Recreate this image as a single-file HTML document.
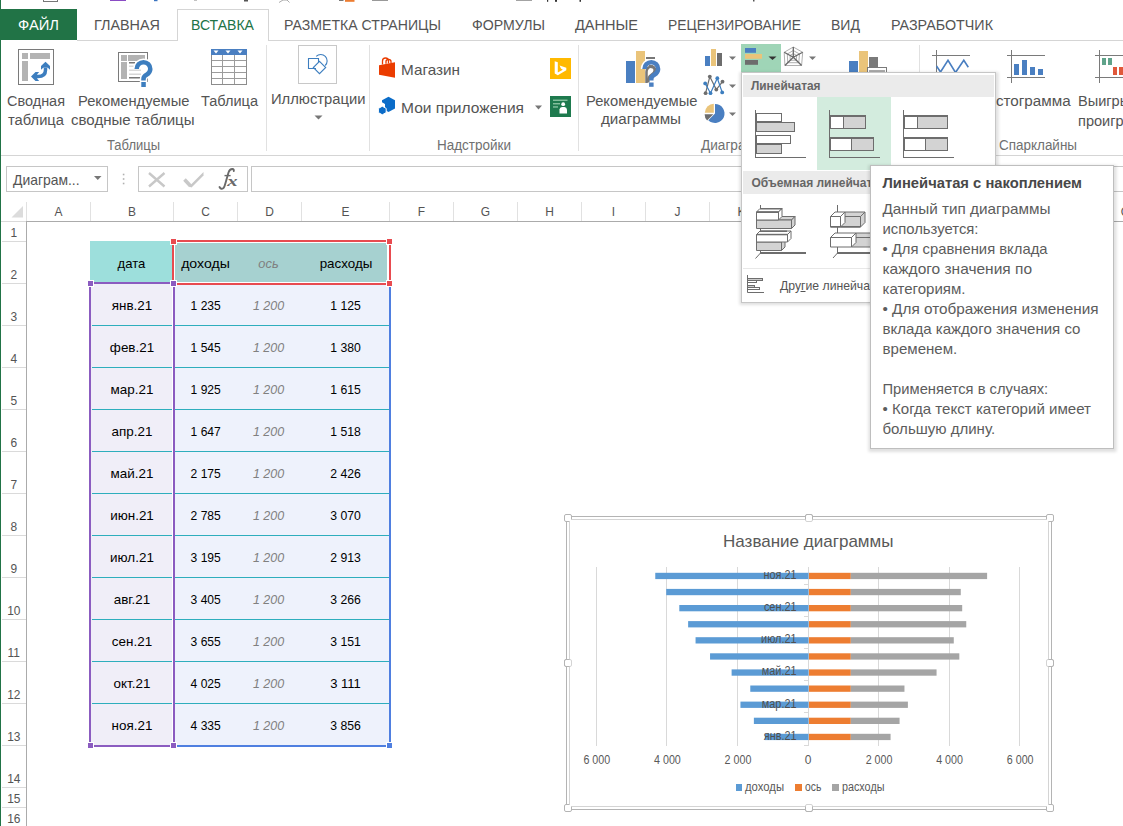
<!DOCTYPE html>
<html><head><meta charset="utf-8"><style>
html,body{margin:0;padding:0;background:#fff;overflow:hidden;width:1123px;height:826px}
svg{display:block;font-family:"Liberation Sans",sans-serif}
</style></head><body>
<svg width="1123" height="826" viewBox="0 0 1123 826">
<rect x="0" y="0" width="1123" height="826" fill="#fff"/>
<rect x="43" y="1" width="15" height="1" fill="#777" />
<rect x="43" y="0" width="1" height="2" fill="#777" />
<rect x="57" y="0" width="1" height="2" fill="#777" />
<rect x="110" y="0" width="16" height="1" fill="#8a4cc4" />
<rect x="154" y="0" width="3.5" height="1.2" fill="#3b74c0" />
<rect x="194" y="0" width="3" height="0.6" fill="#999" />
<rect x="244" y="0" width="4" height="1.5" fill="#555" />
<path d="M279 2.5 L283 0 L287 0 L289.5 2.5" fill="none" stroke="#aaa" stroke-width="1"/>
<rect x="339" y="0" width="4.5" height="0.8" fill="#555" />
<rect x="345" y="0" width="9.5" height="1.8" fill="#ed7d31" />
<rect x="372" y="0" width="16" height="1" fill="#999" />
<rect x="516" y="0" width="16" height="0.9" fill="#999" />
<rect x="547" y="0" width="1.2" height="1.8" fill="#333" />
<rect x="555" y="0" width="2" height="1.8" fill="#333" />
<rect x="579.5" y="0" width="1.5" height="1.8" fill="#333" />
<rect x="753" y="0" width="1.5" height="1.5" fill="#555" />
<rect x="0" y="9" width="77" height="31" fill="#217346" />
<rect x="77" y="40" width="100" height="1" fill="#d5d5d5" />
<rect x="269" y="40" width="854" height="1" fill="#d5d5d5" />
<rect x="177" y="9" width="1" height="32" fill="#d5d5d5" />
<rect x="268" y="9" width="1" height="32" fill="#d5d5d5" />
<rect x="177" y="9" width="92" height="1" fill="#d5d5d5" />
<text x="18" y="30" font-size="15" fill="#fff" textLength="41.00" lengthAdjust="spacingAndGlyphs" text-anchor="start" >ФАЙЛ</text>
<text x="94" y="30" font-size="15" fill="#545454" textLength="66.00" lengthAdjust="spacingAndGlyphs" text-anchor="start" >ГЛАВНАЯ</text>
<text x="191" y="30" font-size="15" fill="#217346" textLength="63.00" lengthAdjust="spacingAndGlyphs" text-anchor="start" >ВСТАВКА</text>
<text x="284" y="30" font-size="15" fill="#545454" textLength="157.00" lengthAdjust="spacingAndGlyphs" text-anchor="start" >РАЗМЕТКА СТРАНИЦЫ</text>
<text x="472" y="30" font-size="15" fill="#545454" textLength="73.00" lengthAdjust="spacingAndGlyphs" text-anchor="start" >ФОРМУЛЫ</text>
<text x="575" y="30" font-size="15" fill="#545454" textLength="63.00" lengthAdjust="spacingAndGlyphs" text-anchor="start" >ДАННЫЕ</text>
<text x="668" y="30" font-size="15" fill="#545454" textLength="133.00" lengthAdjust="spacingAndGlyphs" text-anchor="start" >РЕЦЕНЗИРОВАНИЕ</text>
<text x="831" y="30" font-size="15" fill="#545454" textLength="29.00" lengthAdjust="spacingAndGlyphs" text-anchor="start" >ВИД</text>
<text x="891" y="30" font-size="15" fill="#545454" textLength="102.00" lengthAdjust="spacingAndGlyphs" text-anchor="start" >РАЗРАБОТЧИК</text>
<rect x="0" y="155" width="1123" height="1" fill="#d5d5d5" />
<rect x="266" y="45" width="1" height="106" fill="#e1e1e1" />
<rect x="369" y="45" width="1" height="106" fill="#e1e1e1" />
<rect x="578" y="45" width="1" height="106" fill="#e1e1e1" />
<rect x="919" y="45" width="1" height="106" fill="#e1e1e1" />
<text x="107" y="150" font-size="14" fill="#707070" textLength="53.00" lengthAdjust="spacingAndGlyphs" text-anchor="start" >Таблицы</text>
<text x="437" y="150" font-size="14" fill="#707070" textLength="74.00" lengthAdjust="spacingAndGlyphs" text-anchor="start" >Надстройки</text>
<text x="701" y="150" font-size="14" fill="#707070" textLength="73.00" lengthAdjust="spacingAndGlyphs" text-anchor="start" >Диаграммы</text>
<text x="999" y="150" font-size="14" fill="#707070" textLength="78.00" lengthAdjust="spacingAndGlyphs" text-anchor="start" >Спарклайны</text>
<text x="7" y="106" font-size="14" fill="#545454" textLength="58.00" lengthAdjust="spacingAndGlyphs" text-anchor="start" >Сводная</text>
<text x="8" y="124.5" font-size="14" fill="#545454" textLength="56.00" lengthAdjust="spacingAndGlyphs" text-anchor="start" >таблица</text>
<text x="78" y="106" font-size="14" fill="#545454" textLength="111.50" lengthAdjust="spacingAndGlyphs" text-anchor="start" >Рекомендуемые</text>
<text x="71" y="124.5" font-size="14" fill="#545454" textLength="123.50" lengthAdjust="spacingAndGlyphs" text-anchor="start" >сводные таблицы</text>
<text x="201" y="106" font-size="14" fill="#545454" textLength="57.00" lengthAdjust="spacingAndGlyphs" text-anchor="start" >Таблица</text>
<text x="271" y="104" font-size="14" fill="#545454" textLength="94.50" lengthAdjust="spacingAndGlyphs" text-anchor="start" >Иллюстрации</text>
<path d="M314.5 115.5 L322.5 115.5 L318.5 119.5 Z" fill="#777"/>
<text x="401" y="75.3" font-size="15" fill="#545454" textLength="59.00" lengthAdjust="spacingAndGlyphs" text-anchor="start" >Магазин</text>
<text x="401" y="113" font-size="15" fill="#545454" textLength="123.00" lengthAdjust="spacingAndGlyphs" text-anchor="start" >Мои приложения</text>
<path d="M535 105.5 L542 105.5 L538.5 109.5 Z" fill="#777"/>
<text x="586" y="106.3" font-size="14" fill="#545454" textLength="111.50" lengthAdjust="spacingAndGlyphs" text-anchor="start" >Рекомендуемые</text>
<text x="601" y="124.4" font-size="14" fill="#545454" textLength="80.00" lengthAdjust="spacingAndGlyphs" text-anchor="start" >диаграммы</text>
<text x="980" y="106" font-size="14" fill="#545454" textLength="90.60" lengthAdjust="spacingAndGlyphs" text-anchor="start" >Гистограмма</text>
<text x="1078" y="106" font-size="14" fill="#545454" textLength="67.91" lengthAdjust="spacingAndGlyphs" text-anchor="start" >Выигрыш/</text>
<text x="1078" y="125.5" font-size="14" fill="#545454" textLength="67.76" lengthAdjust="spacingAndGlyphs" text-anchor="start" >проигрыш</text>
<text x="951" y="106" font-size="14" fill="#545454" textLength="49.75" lengthAdjust="spacingAndGlyphs" text-anchor="middle" >График</text>
<rect x="18.5" y="49.5" width="35" height="35" fill="#fff" stroke="#7a7a7a" stroke-width="1"/>
<rect x="22" y="53" width="6" height="6" fill="#b3b3b3" />
<rect x="30" y="53" width="20" height="6" fill="#b3b3b3" />
<rect x="22" y="61" width="6" height="20" fill="#b3b3b3" />
<path d="M45.5 68 L45.5 70 Q45.5 76.5 38 76.5 L37 76.5" fill="none" stroke="#3d7ebf" stroke-width="3.5"/>
<path d="M45.5 61.8 L50 66 L50 69.8 L47.8 67.8 L43.2 67.8 L41 69.8 L41 66 Z" fill="#3d7ebf"/>
<path d="M31 76.5 L35.5 72 L39.2 72 L37.2 74.2 L37.2 78.8 L39.2 81 L35.5 81 Z" fill="#3d7ebf"/>
<rect x="118.5" y="52.5" width="29" height="29" fill="#fff" stroke="#7a7a7a" stroke-width="1"/>
<rect x="121" y="55" width="6" height="6" fill="#b3b3b3" />
<rect x="128" y="55" width="17" height="6" fill="#b3b3b3" />
<rect x="121" y="62" width="6" height="17" fill="#b3b3b3" />
<rect x="129" y="62" width="6" height="1.5" fill="#777" />
<rect x="129" y="65.5" width="12" height="1.5" fill="#d9d9d9" />
<rect x="129" y="69.5" width="12" height="1.5" fill="#d9d9d9" />
<rect x="129" y="73.5" width="12" height="1.5" fill="#d6d6d6" />
<rect x="129" y="77" width="11" height="1.5" fill="#777" />
<path d="M136.7 69 A6.8 6.8 0 0 1 150.3 69 Q150.3 72.5 146.5 74.8 Q143.5 76.5 143.5 79 L143.5 80.6" fill="none" stroke="#fff" stroke-width="7.5"/>
<rect x="139.8" y="80.5" width="7.5" height="8" fill="#fff"/>
<path d="M136.7 69 A6.8 6.8 0 0 1 150.3 69 Q150.3 72.5 146.5 74.8 Q143.5 76.5 143.5 79 L143.5 80.6" fill="none" stroke="#3d7ebf" stroke-width="4.5"/>
<rect x="141.3" y="82" width="4.5" height="5" fill="#3d7ebf" />
<rect x="211" y="49" width="36" height="6" fill="#4a7fc1" />
<rect x="211.5" y="49.5" width="35" height="35" fill="none" stroke="#8c8c8c" stroke-width="1"/>
<rect x="211" y="49" width="36" height="6" fill="#4a7fc1" />
<rect x="212" y="60" width="34" height="1" fill="#9c9c9c" />
<rect x="212" y="66" width="34" height="1" fill="#9c9c9c" />
<rect x="212" y="72" width="34" height="1" fill="#9c9c9c" />
<rect x="212" y="78" width="34" height="1" fill="#9c9c9c" />
<rect x="222" y="55" width="1" height="29" fill="#9c9c9c" />
<rect x="234" y="55" width="1" height="29" fill="#9c9c9c" />
<path d="M213.5 50.5 L218.5 50.5 L216 53.5 Z" fill="#fff"/>
<path d="M225.5 50.5 L230.5 50.5 L228 53.5 Z" fill="#fff"/>
<path d="M237.5 50.5 L242.5 50.5 L240 53.5 Z" fill="#fff"/>
<rect x="298.5" y="45.5" width="38" height="38" fill="#fff" stroke="#c8c8c8" stroke-width="1"/>
<path d="M316 68.5 L308.5 68.5 L308.5 58.5 L318.5 58.5 L318.5 62" fill="none" stroke="#3d7ebf" stroke-width="1.1"/>
<path d="M316.2 56.3 A6 6 0 1 1 325.2 65.5" fill="none" stroke="#3d7ebf" stroke-width="1.1"/>
<path d="M319.5 61.3 L325.7 67.5 L319.5 73.7 L313.3 67.5 Z" fill="none" stroke="#3d7ebf" stroke-width="1.1"/>
<path d="M379 65.2 L395 62.3 L395 77.7 L379 74.7 Z" fill="#eb3c00"/>
<path d="M382.5 64.5 L382.5 61 Q382.5 58 385.5 58 Q388.5 58 388.5 61 L388.5 63.5" fill="none" stroke="#eb3c00" stroke-width="1.3"/>
<path d="M386 63.8 L386 61.5 Q386 59.5 388.5 59.5 Q391 59.5 391 61.5 L391 63" fill="none" stroke="#eb3c00" stroke-width="1.3"/>
<path d="M388.5 96.8 L395 100.3 L395 108.5 L388.5 112 L385 110 L385 104 L382 102.2 L382 100.3 Z" fill="#0b6cc8"/>
<path d="M382.3 106.2 L386.2 108.4 L386.2 112.6 L382.3 114.8 L378.4 112.6 L378.4 108.4 Z" fill="#0b6cc8" stroke="#fff" stroke-width="1"/>
<rect x="550" y="58" width="21" height="21" fill="#ffb900" />
<path d="M554.7 61.3 L557.8 62.3 L557.8 72.6 L562.8 69.8 L560.9 68.6 L559.6 65.4 L566.3 67.7 L566.3 70.3 L557.8 75.3 L554.7 73.6 Z" fill="#fff"/>
<rect x="550" y="96" width="21" height="21" fill="#1e7a4e" />
<rect x="553" y="99.6" width="14.5" height="1.3" fill="#8fc7a6" />
<rect x="553" y="103.1" width="7" height="1.3" fill="#8fc7a6" />
<rect x="553" y="106.3" width="5" height="1.3" fill="#8fc7a6" />
<circle cx="563.2" cy="104.2" r="1.9" fill="#fff"/><path d="M559.5 113.5 L559.5 109.5 Q559.8 107.3 562 107 L564.5 107 Q566.7 107.3 567 109.5 L567 113.5 Z" fill="#fff"/>
<rect x="626" y="61" width="9" height="22" fill="#4a7fc1" />
<rect x="636" y="51" width="9" height="32" fill="#eac47a" />
<rect x="646" y="57" width="9" height="26" fill="#777" />
<path d="M644.5 69 A6.8 6.8 0 0 1 658.0999999999999 69 Q658.0999999999999 72.5 654.3 74.8 Q651.3 76.5 651.3 79 L651.3 80.6" fill="none" stroke="#fff" stroke-width="7.5"/>
<rect x="647.5" y="80.5" width="7.5" height="8" fill="#fff"/>
<rect x="646" y="59" width="9" height="24" fill="#fff" />
<rect x="646" y="57" width="9" height="2" fill="#777" />
<path d="M646.5 83 L646.5 72 Q646.5 67.5 651 66.5 L653 66.5" fill="none" stroke="#777" stroke-width="2.5"/>
<path d="M649 66.5 Q654.5 66 655 70 Q655 73 651.5 75 Q648 77 648 82.5" fill="none" stroke="#777" stroke-width="3"/>
<path d="M644.5 69 A6.8 6.8 0 0 1 658.0999999999999 69 Q658.0999999999999 72.5 654.3 74.8 Q651.3 76.5 651.3 79 L651.3 80.6" fill="none" stroke="#4a7fc1" stroke-width="4.5"/>
<rect x="649.1" y="82.5" width="4.5" height="4.3" fill="#4a7fc1" />
<rect x="705" y="56" width="5" height="10" fill="#4a7fc1" />
<rect x="711" y="49" width="5" height="17" fill="#eac47a" />
<rect x="717" y="53" width="5" height="13" fill="#6d6d6d" />
<path d="M729 56.5 L736 56.5 L732.5 60 Z" fill="#777"/>
<rect x="741" y="44" width="40" height="28" fill="#9fd5b7" />
<rect x="745" y="48" width="11" height="4.8" fill="#4a7fc1" />
<rect x="745" y="54" width="17" height="4.8" fill="#eac47a" />
<rect x="745" y="60" width="13" height="4.8" fill="#6d6d6d" />
<path d="M768.5 56.5 L776.5 56.5 L772.5 60 Z" fill="#333"/>
<g fill="none" stroke="#b0b0b0" stroke-width="1"><path d="M793.30 47.00 L802.70 52.30 L801.60 65.50 L784.90 65.50 L784.20 52.30 Z"/><path d="M793.30 50.50 L799.50 54.00 L798.78 62.71 L787.76 62.71 L787.29 54.00 Z"/><path d="M793.30 53.59 L796.68 55.50 L796.29 60.25 L790.28 60.25 L790.02 55.50 Z"/></g><path d="M793.3 57.3 L793.3 47 M793.3 57.3 L802.7 52.3 M793.3 57.3 L801.6 65.5 M793.3 57.3 L784.9 65.5 M793.3 57.3 L784.2 52.3 " stroke="#686868" stroke-width="1.3" fill="none"/>
<path d="M809 56.5 L816 56.5 L812.5 60 Z" fill="#777"/>
<path d="M705.6 93.2 L709.8 76.6 L716.3 89.6 L722.5 81.7" fill="none" stroke="#6d6d6d" stroke-width="1.2"/>
<path d="M705.2 83.4 L710.5 93.2 L717.3 78.2 L722.2 92.4" fill="none" stroke="#3d7ebf" stroke-width="1.2"/>
<circle cx="705.6" cy="93.2" r="1.9" fill="#6d6d6d"/>
<circle cx="709.8" cy="76.6" r="1.9" fill="#6d6d6d"/>
<circle cx="716.3" cy="89.6" r="1.9" fill="#6d6d6d"/>
<circle cx="722.5" cy="81.7" r="1.9" fill="#6d6d6d"/>
<circle cx="705.2" cy="83.4" r="1.9" fill="#3d7ebf"/>
<circle cx="710.5" cy="93.2" r="1.9" fill="#3d7ebf"/>
<circle cx="717.3" cy="78.2" r="1.9" fill="#3d7ebf"/>
<circle cx="722.2" cy="92.4" r="1.9" fill="#3d7ebf"/>
<path d="M729 84.5 L736 84.5 L732.5 88 Z" fill="#777"/>
<path d="M715 113.5 L715 104 A9.5 9.5 0 1 1 708.3 120.2 Z" fill="#4a7fc1"/>
<path d="M713.8 112.8 L704.8 112.8 A9 9 0 0 1 713.8 103.8 Z" fill="#eac47a"/>
<path d="M713.3 114.3 L704.6 114.3 A8.8 8.8 0 0 0 707.1 120.5 Z" fill="#6d6d6d"/>
<path d="M729 112.5 L736 112.5 L732.5 116 Z" fill="#777"/>
<rect x="849" y="61" width="9" height="14" fill="#4a7fc1" />
<rect x="859" y="51" width="9" height="24" fill="#eac47a" />
<rect x="869" y="57" width="9" height="18" fill="#7a7a7a" />
<rect x="867.5" y="67.5" width="19" height="9" fill="#fff" stroke="#7a7a7a" stroke-width="1"/>
<rect x="869" y="70" width="16" height="2" fill="#aaa" />
<rect x="936" y="50" width="1" height="33" fill="#7a7a7a" />
<rect x="932" y="55" width="38" height="1" fill="#7a7a7a" />
<rect x="932" y="77" width="38" height="1" fill="#7a7a7a" />
<path d="M936.5 66 L940.5 72 L948 60.3 L955.5 72.5 L963.8 60.3 L968.3 67.3" fill="none" stroke="#4a7fc1" stroke-width="1.6"/>
<rect x="1011" y="50" width="1" height="33" fill="#7a7a7a" />
<rect x="1007" y="55" width="38" height="1" fill="#7a7a7a" />
<rect x="1007" y="77" width="38" height="1" fill="#7a7a7a" />
<rect x="1014" y="64" width="5" height="11" fill="#4a7fc1" />
<rect x="1022" y="60" width="5" height="15" fill="#4a7fc1" />
<rect x="1030" y="67" width="5" height="8" fill="#4a7fc1" />
<rect x="1038" y="69" width="5" height="6" fill="#4a7fc1" />
<rect x="1099" y="50" width="1" height="33" fill="#7a7a7a" />
<rect x="1095" y="55" width="28" height="1" fill="#7a7a7a" />
<rect x="1095" y="77" width="28" height="1" fill="#7a7a7a" />
<rect x="1102" y="58" width="4" height="7" fill="#5fa38a" />
<rect x="1108" y="58" width="4" height="7" fill="#5fa38a" />
<rect x="1113" y="67" width="4" height="8" fill="#e0583a" />
<rect x="1119" y="67" width="4" height="8" fill="#e0583a" />
<rect x="6.5" y="166.5" width="101" height="25" fill="#fff" stroke="#c6c6c6" stroke-width="1"/>
<text x="13" y="185" font-size="15" fill="#545454" textLength="66.50" lengthAdjust="spacingAndGlyphs" text-anchor="start" >Диаграм...</text>
<path d="M94 176 L101.5 176 L97.75 180 Z" fill="#777"/>
<rect x="122.8" y="173.7" width="1.6" height="1.6" fill="#b0b0b0" />
<rect x="122.8" y="178.2" width="1.6" height="1.6" fill="#b0b0b0" />
<rect x="122.8" y="182.7" width="1.6" height="1.6" fill="#b0b0b0" />
<rect x="138.5" y="166.5" width="109" height="25" fill="#fff" stroke="#c6c6c6" stroke-width="1"/>
<path d="M149 173 L164.5 186.5 M164.5 173 L149 186.5" stroke="#c8c8c8" stroke-width="2.4" fill="none"/>
<path d="M184.5 179.5 L190.5 186" stroke="#c8c8c8" stroke-width="3.6" fill="none"/><path d="M189 186.5 L203.5 172 L203.5 175.5 L191.5 187.5 Z" fill="#c8c8c8"/>
<path d="M219.5 187 Q221 190 223.5 188 Q224.5 187 225.5 183 L228.5 172.5 Q229.8 168.8 232.5 169 Q234 169.2 233.8 171" fill="none" stroke="#6a6a6a" stroke-width="1.9" stroke-linecap="round"/>
<path d="M224.5 175.6 L230.6 175.6" stroke="#6a6a6a" stroke-width="1.4"/>
<text x="227.3" y="186" font-family="Liberation Serif" font-size="14" font-style="italic" font-weight="bold" fill="#6a6a6a" textLength="10.3" lengthAdjust="spacingAndGlyphs">x</text>
<rect x="251.5" y="166.5" width="879" height="25" fill="#fff" stroke="#c6c6c6" stroke-width="1"/>
<rect x="26" y="202" width="1" height="19" fill="#e1e1e1" />
<rect x="90" y="202" width="1" height="19" fill="#e1e1e1" />
<rect x="173" y="202" width="1" height="19" fill="#e1e1e1" />
<rect x="237" y="202" width="1" height="19" fill="#e1e1e1" />
<rect x="301" y="202" width="1" height="19" fill="#e1e1e1" />
<rect x="389" y="202" width="1" height="19" fill="#e1e1e1" />
<rect x="453" y="202" width="1" height="19" fill="#e1e1e1" />
<rect x="517" y="202" width="1" height="19" fill="#e1e1e1" />
<rect x="581" y="202" width="1" height="19" fill="#e1e1e1" />
<rect x="645" y="202" width="1" height="19" fill="#e1e1e1" />
<rect x="709" y="202" width="1" height="19" fill="#e1e1e1" />
<rect x="773" y="202" width="1" height="19" fill="#e1e1e1" />
<rect x="837" y="202" width="1" height="19" fill="#e1e1e1" />
<rect x="901" y="202" width="1" height="19" fill="#e1e1e1" />
<rect x="965" y="202" width="1" height="19" fill="#e1e1e1" />
<rect x="1029" y="202" width="1" height="19" fill="#e1e1e1" />
<rect x="1093" y="202" width="1" height="19" fill="#e1e1e1" />
<rect x="1157" y="202" width="1" height="19" fill="#e1e1e1" />
<rect x="1" y="221" width="25" height="1" fill="#dadada" />
<rect x="26" y="221" width="1097" height="1" fill="#ababab" />
<rect x="26" y="221" width="1" height="605" fill="#ababab" />
<path d="M11.5 217.5 L23 206 L23 217.5 Z" fill="#dcdcdc"/>
<text x="58.5" y="216" font-size="13" fill="#545454" textLength="7.98" lengthAdjust="spacingAndGlyphs" text-anchor="middle" >A</text>
<text x="132.0" y="216" font-size="13" fill="#545454" textLength="7.98" lengthAdjust="spacingAndGlyphs" text-anchor="middle" >B</text>
<text x="205.5" y="216" font-size="13" fill="#545454" textLength="8.64" lengthAdjust="spacingAndGlyphs" text-anchor="middle" >C</text>
<text x="269.5" y="216" font-size="13" fill="#545454" textLength="8.64" lengthAdjust="spacingAndGlyphs" text-anchor="middle" >D</text>
<text x="345.5" y="216" font-size="13" fill="#545454" textLength="7.98" lengthAdjust="spacingAndGlyphs" text-anchor="middle" >E</text>
<text x="421.5" y="216" font-size="13" fill="#545454" textLength="7.30" lengthAdjust="spacingAndGlyphs" text-anchor="middle" >F</text>
<text x="485.5" y="216" font-size="13" fill="#545454" textLength="9.30" lengthAdjust="spacingAndGlyphs" text-anchor="middle" >G</text>
<text x="549.5" y="216" font-size="13" fill="#545454" textLength="8.64" lengthAdjust="spacingAndGlyphs" text-anchor="middle" >H</text>
<text x="613.5" y="216" font-size="13" fill="#545454" textLength="3.32" lengthAdjust="spacingAndGlyphs" text-anchor="middle" >I</text>
<text x="677.5" y="216" font-size="13" fill="#545454" textLength="5.98" lengthAdjust="spacingAndGlyphs" text-anchor="middle" >J</text>
<text x="741.5" y="216" font-size="13" fill="#545454" textLength="7.98" lengthAdjust="spacingAndGlyphs" text-anchor="middle" >K</text>
<text x="805.5" y="216" font-size="13" fill="#545454" textLength="6.65" lengthAdjust="spacingAndGlyphs" text-anchor="middle" >L</text>
<text x="869.5" y="216" font-size="13" fill="#545454" textLength="9.96" lengthAdjust="spacingAndGlyphs" text-anchor="middle" >M</text>
<text x="933.5" y="216" font-size="13" fill="#545454" textLength="8.64" lengthAdjust="spacingAndGlyphs" text-anchor="middle" >N</text>
<text x="997.5" y="216" font-size="13" fill="#545454" textLength="9.30" lengthAdjust="spacingAndGlyphs" text-anchor="middle" >O</text>
<text x="1061.5" y="216" font-size="13" fill="#545454" textLength="7.98" lengthAdjust="spacingAndGlyphs" text-anchor="middle" >P</text>
<text x="1125.5" y="216" font-size="13" fill="#545454" textLength="9.30" lengthAdjust="spacingAndGlyphs" text-anchor="middle" >Q</text>
<rect x="2" y="241" width="24" height="1" fill="#dadada" />
<text x="13.8" y="237" font-size="13" fill="#545454" textLength="6.65" lengthAdjust="spacingAndGlyphs" text-anchor="middle" >1</text>
<rect x="2" y="283" width="24" height="1" fill="#dadada" />
<text x="13.8" y="279" font-size="13" fill="#545454" textLength="6.65" lengthAdjust="spacingAndGlyphs" text-anchor="middle" >2</text>
<rect x="2" y="325" width="24" height="1" fill="#dadada" />
<text x="13.8" y="321" font-size="13" fill="#545454" textLength="6.65" lengthAdjust="spacingAndGlyphs" text-anchor="middle" >3</text>
<rect x="2" y="367" width="24" height="1" fill="#dadada" />
<text x="13.8" y="363" font-size="13" fill="#545454" textLength="6.65" lengthAdjust="spacingAndGlyphs" text-anchor="middle" >4</text>
<rect x="2" y="409" width="24" height="1" fill="#dadada" />
<text x="13.8" y="405" font-size="13" fill="#545454" textLength="6.65" lengthAdjust="spacingAndGlyphs" text-anchor="middle" >5</text>
<rect x="2" y="451" width="24" height="1" fill="#dadada" />
<text x="13.8" y="447" font-size="13" fill="#545454" textLength="6.65" lengthAdjust="spacingAndGlyphs" text-anchor="middle" >6</text>
<rect x="2" y="493" width="24" height="1" fill="#dadada" />
<text x="13.8" y="489" font-size="13" fill="#545454" textLength="6.65" lengthAdjust="spacingAndGlyphs" text-anchor="middle" >7</text>
<rect x="2" y="535" width="24" height="1" fill="#dadada" />
<text x="13.8" y="531" font-size="13" fill="#545454" textLength="6.65" lengthAdjust="spacingAndGlyphs" text-anchor="middle" >8</text>
<rect x="2" y="577" width="24" height="1" fill="#dadada" />
<text x="13.8" y="573" font-size="13" fill="#545454" textLength="6.65" lengthAdjust="spacingAndGlyphs" text-anchor="middle" >9</text>
<rect x="2" y="619" width="24" height="1" fill="#dadada" />
<text x="13.8" y="615" font-size="13" fill="#545454" textLength="13.30" lengthAdjust="spacingAndGlyphs" text-anchor="middle" >10</text>
<rect x="2" y="661" width="24" height="1" fill="#dadada" />
<text x="13.8" y="657" font-size="13" fill="#545454" textLength="12.41" lengthAdjust="spacingAndGlyphs" text-anchor="middle" >11</text>
<rect x="2" y="703" width="24" height="1" fill="#dadada" />
<text x="13.8" y="699" font-size="13" fill="#545454" textLength="13.30" lengthAdjust="spacingAndGlyphs" text-anchor="middle" >12</text>
<rect x="2" y="745" width="24" height="1" fill="#dadada" />
<text x="13.8" y="741" font-size="13" fill="#545454" textLength="13.30" lengthAdjust="spacingAndGlyphs" text-anchor="middle" >13</text>
<rect x="2" y="787" width="24" height="1" fill="#dadada" />
<text x="13.8" y="783" font-size="13" fill="#545454" textLength="13.30" lengthAdjust="spacingAndGlyphs" text-anchor="middle" >14</text>
<rect x="2" y="807" width="24" height="1" fill="#dadada" />
<text x="13.8" y="803" font-size="13" fill="#545454" textLength="13.30" lengthAdjust="spacingAndGlyphs" text-anchor="middle" >15</text>
<rect x="2" y="827" width="24" height="1" fill="#dadada" />
<text x="13.8" y="823" font-size="13" fill="#545454" textLength="13.30" lengthAdjust="spacingAndGlyphs" text-anchor="middle" >16</text>
<rect x="90" y="241" width="82" height="41" fill="#9ddfdc" />
<rect x="175" y="243" width="212" height="39" fill="#a6d1d0" />
<rect x="91" y="284" width="81" height="461" fill="#f0eef8" />
<rect x="175" y="285" width="214" height="460" fill="#eef2fc" />
<rect x="92" y="325" width="80" height="1" fill="#2eaebd" />
<rect x="175" y="325" width="214" height="1" fill="#2eaebd" />
<rect x="92" y="367" width="80" height="1" fill="#2eaebd" />
<rect x="175" y="367" width="214" height="1" fill="#2eaebd" />
<rect x="92" y="409" width="80" height="1" fill="#2eaebd" />
<rect x="175" y="409" width="214" height="1" fill="#2eaebd" />
<rect x="92" y="451" width="80" height="1" fill="#2eaebd" />
<rect x="175" y="451" width="214" height="1" fill="#2eaebd" />
<rect x="92" y="493" width="80" height="1" fill="#2eaebd" />
<rect x="175" y="493" width="214" height="1" fill="#2eaebd" />
<rect x="92" y="535" width="80" height="1" fill="#2eaebd" />
<rect x="175" y="535" width="214" height="1" fill="#2eaebd" />
<rect x="92" y="577" width="80" height="1" fill="#2eaebd" />
<rect x="175" y="577" width="214" height="1" fill="#2eaebd" />
<rect x="92" y="619" width="80" height="1" fill="#2eaebd" />
<rect x="175" y="619" width="214" height="1" fill="#2eaebd" />
<rect x="92" y="661" width="80" height="1" fill="#2eaebd" />
<rect x="175" y="661" width="214" height="1" fill="#2eaebd" />
<rect x="92" y="703" width="80" height="1" fill="#2eaebd" />
<rect x="175" y="703" width="214" height="1" fill="#2eaebd" />
<text x="131.5" y="267.8" font-size="13.5" fill="#000" textLength="27.80" lengthAdjust="spacingAndGlyphs" text-anchor="middle" >дата</text>
<text x="205.5" y="267.8" font-size="13.5" fill="#000" textLength="48.70" lengthAdjust="spacingAndGlyphs" text-anchor="middle" >доходы</text>
<text x="268.5" y="267.8" font-size="13.5" fill="#808080" font-style="italic" textLength="20.30" lengthAdjust="spacingAndGlyphs" text-anchor="middle" >ось</text>
<text x="346" y="267.8" font-size="13.5" fill="#000" textLength="52.70" lengthAdjust="spacingAndGlyphs" text-anchor="middle" >расходы</text>
<text x="132" y="310" font-size="13.5" fill="#000" textLength="40.50" lengthAdjust="spacingAndGlyphs" text-anchor="middle" >янв.21</text>
<text x="205.7" y="310" font-size="13.5" fill="#000" textLength="30.20" lengthAdjust="spacingAndGlyphs" text-anchor="middle" >1 235</text>
<text x="268.6" y="310" font-size="13.5" fill="#808080" font-style="italic" textLength="31.30" lengthAdjust="spacingAndGlyphs" text-anchor="middle" >1 200</text>
<text x="345.5" y="310" font-size="13.5" fill="#000" textLength="30.60" lengthAdjust="spacingAndGlyphs" text-anchor="middle" >1 125</text>
<text x="132" y="352" font-size="13.5" fill="#000" textLength="44.33" lengthAdjust="spacingAndGlyphs" text-anchor="middle" >фев.21</text>
<text x="205.7" y="352" font-size="13.5" fill="#000" textLength="30.20" lengthAdjust="spacingAndGlyphs" text-anchor="middle" >1 545</text>
<text x="268.6" y="352" font-size="13.5" fill="#808080" font-style="italic" textLength="31.30" lengthAdjust="spacingAndGlyphs" text-anchor="middle" >1 200</text>
<text x="345.5" y="352" font-size="13.5" fill="#000" textLength="30.60" lengthAdjust="spacingAndGlyphs" text-anchor="middle" >1 380</text>
<text x="132" y="394" font-size="13.5" fill="#000" textLength="42.85" lengthAdjust="spacingAndGlyphs" text-anchor="middle" >мар.21</text>
<text x="205.7" y="394" font-size="13.5" fill="#000" textLength="30.20" lengthAdjust="spacingAndGlyphs" text-anchor="middle" >1 925</text>
<text x="268.6" y="394" font-size="13.5" fill="#808080" font-style="italic" textLength="31.30" lengthAdjust="spacingAndGlyphs" text-anchor="middle" >1 200</text>
<text x="345.5" y="394" font-size="13.5" fill="#000" textLength="30.60" lengthAdjust="spacingAndGlyphs" text-anchor="middle" >1 615</text>
<text x="132" y="436" font-size="13.5" fill="#000" textLength="40.89" lengthAdjust="spacingAndGlyphs" text-anchor="middle" >апр.21</text>
<text x="205.7" y="436" font-size="13.5" fill="#000" textLength="30.20" lengthAdjust="spacingAndGlyphs" text-anchor="middle" >1 647</text>
<text x="268.6" y="436" font-size="13.5" fill="#808080" font-style="italic" textLength="31.30" lengthAdjust="spacingAndGlyphs" text-anchor="middle" >1 200</text>
<text x="345.5" y="436" font-size="13.5" fill="#000" textLength="30.60" lengthAdjust="spacingAndGlyphs" text-anchor="middle" >1 518</text>
<text x="132" y="478" font-size="13.5" fill="#000" textLength="42.88" lengthAdjust="spacingAndGlyphs" text-anchor="middle" >май.21</text>
<text x="205.7" y="478" font-size="13.5" fill="#000" textLength="30.20" lengthAdjust="spacingAndGlyphs" text-anchor="middle" >2 175</text>
<text x="268.6" y="478" font-size="13.5" fill="#808080" font-style="italic" textLength="31.30" lengthAdjust="spacingAndGlyphs" text-anchor="middle" >1 200</text>
<text x="345.5" y="478" font-size="13.5" fill="#000" textLength="30.60" lengthAdjust="spacingAndGlyphs" text-anchor="middle" >2 426</text>
<text x="132" y="520" font-size="13.5" fill="#000" textLength="43.67" lengthAdjust="spacingAndGlyphs" text-anchor="middle" >июн.21</text>
<text x="205.7" y="520" font-size="13.5" fill="#000" textLength="30.20" lengthAdjust="spacingAndGlyphs" text-anchor="middle" >2 785</text>
<text x="268.6" y="520" font-size="13.5" fill="#808080" font-style="italic" textLength="31.30" lengthAdjust="spacingAndGlyphs" text-anchor="middle" >1 200</text>
<text x="345.5" y="520" font-size="13.5" fill="#000" textLength="30.60" lengthAdjust="spacingAndGlyphs" text-anchor="middle" >3 070</text>
<text x="132" y="562" font-size="13.5" fill="#000" textLength="43.79" lengthAdjust="spacingAndGlyphs" text-anchor="middle" >июл.21</text>
<text x="205.7" y="562" font-size="13.5" fill="#000" textLength="30.20" lengthAdjust="spacingAndGlyphs" text-anchor="middle" >3 195</text>
<text x="268.6" y="562" font-size="13.5" fill="#808080" font-style="italic" textLength="31.30" lengthAdjust="spacingAndGlyphs" text-anchor="middle" >1 200</text>
<text x="345.5" y="562" font-size="13.5" fill="#000" textLength="30.60" lengthAdjust="spacingAndGlyphs" text-anchor="middle" >2 913</text>
<text x="132" y="604" font-size="13.5" fill="#000" textLength="36.54" lengthAdjust="spacingAndGlyphs" text-anchor="middle" >авг.21</text>
<text x="205.7" y="604" font-size="13.5" fill="#000" textLength="30.20" lengthAdjust="spacingAndGlyphs" text-anchor="middle" >3 405</text>
<text x="268.6" y="604" font-size="13.5" fill="#808080" font-style="italic" textLength="31.30" lengthAdjust="spacingAndGlyphs" text-anchor="middle" >1 200</text>
<text x="345.5" y="604" font-size="13.5" fill="#000" textLength="30.60" lengthAdjust="spacingAndGlyphs" text-anchor="middle" >3 266</text>
<text x="132" y="646" font-size="13.5" fill="#000" textLength="40.27" lengthAdjust="spacingAndGlyphs" text-anchor="middle" >сен.21</text>
<text x="205.7" y="646" font-size="13.5" fill="#000" textLength="30.20" lengthAdjust="spacingAndGlyphs" text-anchor="middle" >3 655</text>
<text x="268.6" y="646" font-size="13.5" fill="#808080" font-style="italic" textLength="31.30" lengthAdjust="spacingAndGlyphs" text-anchor="middle" >1 200</text>
<text x="345.5" y="646" font-size="13.5" fill="#000" textLength="30.60" lengthAdjust="spacingAndGlyphs" text-anchor="middle" >3 151</text>
<text x="132" y="688" font-size="13.5" fill="#000" textLength="36.83" lengthAdjust="spacingAndGlyphs" text-anchor="middle" >окт.21</text>
<text x="205.7" y="688" font-size="13.5" fill="#000" textLength="30.20" lengthAdjust="spacingAndGlyphs" text-anchor="middle" >4 025</text>
<text x="268.6" y="688" font-size="13.5" fill="#808080" font-style="italic" textLength="31.30" lengthAdjust="spacingAndGlyphs" text-anchor="middle" >1 200</text>
<text x="345.5" y="688" font-size="13.5" fill="#000" textLength="30.60" lengthAdjust="spacingAndGlyphs" text-anchor="middle" >3 111</text>
<text x="132" y="730" font-size="13.5" fill="#000" textLength="40.83" lengthAdjust="spacingAndGlyphs" text-anchor="middle" >ноя.21</text>
<text x="205.7" y="730" font-size="13.5" fill="#000" textLength="30.20" lengthAdjust="spacingAndGlyphs" text-anchor="middle" >4 335</text>
<text x="268.6" y="730" font-size="13.5" fill="#808080" font-style="italic" textLength="31.30" lengthAdjust="spacingAndGlyphs" text-anchor="middle" >1 200</text>
<text x="345.5" y="730" font-size="13.5" fill="#000" textLength="30.60" lengthAdjust="spacingAndGlyphs" text-anchor="middle" >3 856</text>
<rect x="389" y="284" width="2" height="463" fill="#4f7fe0" />
<rect x="174" y="745" width="217" height="2" fill="#4f7fe0" />
<rect x="89" y="282" width="2" height="465" fill="#8b5cc0" />
<rect x="173" y="282" width="2" height="465" fill="#8b5cc0" />
<rect x="89" y="282" width="86" height="2" fill="#8b5cc0" />
<rect x="89" y="745" width="86" height="2" fill="#8b5cc0" />
<rect x="172" y="240" width="219" height="2" fill="#e84b50" />
<rect x="172" y="240" width="2" height="45" fill="#e84b50" />
<rect x="389" y="240" width="2" height="45" fill="#e84b50" />
<rect x="175" y="283" width="216" height="2" fill="#e84b50" />
<rect x="170" y="238" width="7" height="7" fill="#fff" />
<rect x="171" y="239" width="5" height="5" fill="#e84b50" />
<rect x="386" y="238" width="7" height="7" fill="#fff" />
<rect x="387" y="239" width="5" height="5" fill="#e84b50" />
<rect x="386" y="280" width="7" height="7" fill="#fff" />
<rect x="387" y="281" width="5" height="5" fill="#e84b50" />
<rect x="87" y="280" width="7" height="7" fill="#fff" />
<rect x="88" y="281" width="5" height="5" fill="#8b5cc0" />
<rect x="170" y="280" width="7" height="7" fill="#fff" />
<rect x="171" y="281" width="5" height="5" fill="#8b5cc0" />
<rect x="87" y="742" width="7" height="7" fill="#fff" />
<rect x="88" y="743" width="5" height="5" fill="#8b5cc0" />
<rect x="170" y="742" width="7" height="7" fill="#fff" />
<rect x="171" y="743" width="5" height="5" fill="#8b5cc0" />
<rect x="386" y="742" width="7" height="7" fill="#fff" />
<rect x="387" y="743" width="5" height="5" fill="#4f7fe0" />
<rect x="566.5" y="516.5" width="485" height="293" fill="#fff" stroke="#b4b4b4" stroke-width="1"/>
<rect x="569.5" y="519.5" width="479" height="287" fill="none" stroke="#d4d4d4" stroke-width="1"/>
<defs><clipPath id="outer"><path clip-rule="evenodd" d="M0 0 H1123 V826 H0 Z M569.5 519.5 H1048.5 V806.5 H569.5 Z"/></clipPath></defs>
<rect x="564.5" y="514.5" width="7" height="7" rx="1.5" fill="#fff" stroke="none" stroke-width="1"/>
<rect x="564.5" y="514.5" width="7" height="7" rx="1.5" fill="none" stroke="#b4b4b4" stroke-width="1" clip-path="url(#outer)"/>
<rect x="805.5" y="514.5" width="7" height="7" rx="1.5" fill="#fff" stroke="#d4d4d4" stroke-width="1"/>
<rect x="805.5" y="514.5" width="7" height="7" rx="1.5" fill="none" stroke="#b4b4b4" stroke-width="1" clip-path="url(#outer)"/>
<rect x="1046.5" y="514.5" width="7" height="7" rx="1.5" fill="#fff" stroke="none" stroke-width="1"/>
<rect x="1046.5" y="514.5" width="7" height="7" rx="1.5" fill="none" stroke="#b4b4b4" stroke-width="1" clip-path="url(#outer)"/>
<rect x="564.5" y="659.5" width="7" height="7" rx="1.5" fill="#fff" stroke="#d4d4d4" stroke-width="1"/>
<rect x="564.5" y="659.5" width="7" height="7" rx="1.5" fill="none" stroke="#b4b4b4" stroke-width="1" clip-path="url(#outer)"/>
<rect x="1046.5" y="659.5" width="7" height="7" rx="1.5" fill="#fff" stroke="#d4d4d4" stroke-width="1"/>
<rect x="1046.5" y="659.5" width="7" height="7" rx="1.5" fill="none" stroke="#b4b4b4" stroke-width="1" clip-path="url(#outer)"/>
<rect x="564.5" y="804.5" width="7" height="7" rx="1.5" fill="#fff" stroke="none" stroke-width="1"/>
<rect x="564.5" y="804.5" width="7" height="7" rx="1.5" fill="none" stroke="#b4b4b4" stroke-width="1" clip-path="url(#outer)"/>
<rect x="805.5" y="804.5" width="7" height="7" rx="1.5" fill="#fff" stroke="#d4d4d4" stroke-width="1"/>
<rect x="805.5" y="804.5" width="7" height="7" rx="1.5" fill="none" stroke="#b4b4b4" stroke-width="1" clip-path="url(#outer)"/>
<rect x="1046.5" y="804.5" width="7" height="7" rx="1.5" fill="#fff" stroke="none" stroke-width="1"/>
<rect x="1046.5" y="804.5" width="7" height="7" rx="1.5" fill="none" stroke="#b4b4b4" stroke-width="1" clip-path="url(#outer)"/>
<text x="723" y="547" font-size="17" fill="#595959" textLength="170.50" lengthAdjust="spacingAndGlyphs" text-anchor="start" >Название диаграммы</text>
<rect x="596" y="567" width="1" height="179" fill="#d9d9d9" />
<rect x="666" y="567" width="1" height="179" fill="#d9d9d9" />
<rect x="737" y="567" width="1" height="179" fill="#d9d9d9" />
<rect x="878" y="567" width="1" height="179" fill="#d9d9d9" />
<rect x="949" y="567" width="1" height="179" fill="#d9d9d9" />
<rect x="1019" y="567" width="1" height="179" fill="#d9d9d9" />
<rect x="808" y="567" width="1" height="179" fill="#d9d9d9" />
<rect x="804" y="584" width="4" height="1" fill="#d9d9d9" />
<rect x="804" y="616" width="4" height="1" fill="#d9d9d9" />
<rect x="804" y="648" width="4" height="1" fill="#d9d9d9" />
<rect x="804" y="680" width="4" height="1" fill="#d9d9d9" />
<rect x="804" y="712" width="4" height="1" fill="#d9d9d9" />
<rect x="804" y="745" width="4" height="1" fill="#d9d9d9" />
<rect x="764.84" y="733.8" width="43.66" height="6.3" fill="#5b9bd5" />
<rect x="809" y="733.8" width="41.8" height="6.3" fill="#ed7d31" />
<rect x="850.8" y="733.8" width="39.77" height="6.3" fill="#a5a5a5" />
<rect x="753.88" y="717.7" width="54.62" height="6.3" fill="#5b9bd5" />
<rect x="809" y="717.7" width="41.8" height="6.3" fill="#ed7d31" />
<rect x="850.8" y="717.7" width="48.78" height="6.3" fill="#a5a5a5" />
<rect x="740.45" y="701.6" width="68.05" height="6.3" fill="#5b9bd5" />
<rect x="809" y="701.6" width="41.8" height="6.3" fill="#ed7d31" />
<rect x="850.8" y="701.6" width="57.09" height="6.3" fill="#a5a5a5" />
<rect x="750.28" y="685.5" width="58.22" height="6.3" fill="#5b9bd5" />
<rect x="809" y="685.5" width="41.8" height="6.3" fill="#ed7d31" />
<rect x="850.8" y="685.5" width="53.66" height="6.3" fill="#a5a5a5" />
<rect x="731.61" y="669.4" width="76.89" height="6.3" fill="#5b9bd5" />
<rect x="809" y="669.4" width="41.8" height="6.3" fill="#ed7d31" />
<rect x="850.8" y="669.4" width="85.76" height="6.3" fill="#a5a5a5" />
<rect x="710.05" y="653.3" width="98.45" height="6.3" fill="#5b9bd5" />
<rect x="809" y="653.3" width="41.8" height="6.3" fill="#ed7d31" />
<rect x="850.8" y="653.3" width="108.52" height="6.3" fill="#a5a5a5" />
<rect x="695.56" y="637.2" width="112.94" height="6.3" fill="#5b9bd5" />
<rect x="809" y="637.2" width="41.8" height="6.3" fill="#ed7d31" />
<rect x="850.8" y="637.2" width="102.97" height="6.3" fill="#a5a5a5" />
<rect x="688.13" y="621.1" width="120.37" height="6.3" fill="#5b9bd5" />
<rect x="809" y="621.1" width="41.8" height="6.3" fill="#ed7d31" />
<rect x="850.8" y="621.1" width="115.45" height="6.3" fill="#a5a5a5" />
<rect x="679.3" y="605.0" width="129.2" height="6.3" fill="#5b9bd5" />
<rect x="809" y="605.0" width="41.8" height="6.3" fill="#ed7d31" />
<rect x="850.8" y="605.0" width="111.39" height="6.3" fill="#a5a5a5" />
<rect x="666.22" y="588.9" width="142.28" height="6.3" fill="#5b9bd5" />
<rect x="809" y="588.9" width="41.8" height="6.3" fill="#ed7d31" />
<rect x="850.8" y="588.9" width="109.97" height="6.3" fill="#a5a5a5" />
<rect x="655.26" y="572.8" width="153.24" height="6.3" fill="#5b9bd5" />
<rect x="809" y="572.8" width="41.8" height="6.3" fill="#ed7d31" />
<rect x="850.8" y="572.8" width="136.31" height="6.3" fill="#a5a5a5" />
<text x="796.5" y="739.85" font-size="12" fill="#505050" textLength="32.74" lengthAdjust="spacingAndGlyphs" text-anchor="end" >янв.21</text>
<text x="796.5" y="707.65" font-size="12" fill="#505050" textLength="34.64" lengthAdjust="spacingAndGlyphs" text-anchor="end" >мар.21</text>
<text x="796.5" y="675.45" font-size="12" fill="#505050" textLength="34.67" lengthAdjust="spacingAndGlyphs" text-anchor="end" >май.21</text>
<text x="796.5" y="643.25" font-size="12" fill="#505050" textLength="35.40" lengthAdjust="spacingAndGlyphs" text-anchor="end" >июл.21</text>
<text x="796.5" y="611.05" font-size="12" fill="#505050" textLength="32.56" lengthAdjust="spacingAndGlyphs" text-anchor="end" >сен.21</text>
<text x="796.5" y="578.85" font-size="12" fill="#505050" textLength="33.01" lengthAdjust="spacingAndGlyphs" text-anchor="end" >ноя.21</text>
<text x="596.85" y="764" font-size="12" fill="#595959" textLength="26.80" lengthAdjust="spacingAndGlyphs" text-anchor="middle" >6 000</text>
<text x="667.4" y="764" font-size="12" fill="#595959" textLength="26.80" lengthAdjust="spacingAndGlyphs" text-anchor="middle" >4 000</text>
<text x="737.95" y="764" font-size="12" fill="#595959" textLength="26.80" lengthAdjust="spacingAndGlyphs" text-anchor="middle" >2 000</text>
<text x="879.05" y="764" font-size="12" fill="#595959" textLength="26.80" lengthAdjust="spacingAndGlyphs" text-anchor="middle" >2 000</text>
<text x="949.6" y="764" font-size="12" fill="#595959" textLength="26.80" lengthAdjust="spacingAndGlyphs" text-anchor="middle" >4 000</text>
<text x="1020.15" y="764" font-size="12" fill="#595959" textLength="26.80" lengthAdjust="spacingAndGlyphs" text-anchor="middle" >6 000</text>
<text x="808" y="764" font-size="12" fill="#595959" text-anchor="middle" >0</text>
<rect x="736" y="784" width="6" height="7" fill="#5b9bd5" />
<text x="745" y="790.5" font-size="12" fill="#595959" textLength="39.00" lengthAdjust="spacingAndGlyphs" text-anchor="start" >доходы</text>
<rect x="795" y="784" width="7" height="7" fill="#ed7d31" />
<text x="805" y="790.5" font-size="12" fill="#595959" textLength="16.30" lengthAdjust="spacingAndGlyphs" text-anchor="start" >ось</text>
<rect x="832" y="784" width="7" height="7" fill="#a5a5a5" />
<text x="842" y="790.5" font-size="12" fill="#595959" textLength="42.40" lengthAdjust="spacingAndGlyphs" text-anchor="start" >расходы</text>
<defs><filter id="sh" x="-10%" y="-10%" width="120%" height="120%"><feGaussianBlur stdDeviation="1.8"/></filter></defs>
<rect x="739.5" y="72" width="259" height="233" fill="#000" opacity="0.12" filter="url(#sh)"/>
<rect x="741.5" y="72.5" width="254" height="230" fill="#fff" stroke="#c6c6c6" stroke-width="1"/>
<rect x="743" y="75" width="251" height="22" fill="#ebebeb" />
<text x="751" y="90" font-size="12" fill="#666" font-weight="bold" textLength="69.50" lengthAdjust="spacingAndGlyphs" text-anchor="start" >Линейчатая</text>
<rect x="817" y="97" width="74" height="73" fill="#d3ecde" />
<rect x="743" y="171" width="251" height="23" fill="#ebebeb" />
<text x="751.5" y="187" font-size="12" fill="#666" font-weight="bold" textLength="134.47" lengthAdjust="spacingAndGlyphs" text-anchor="start" >Объемная линейчатая</text>
<rect x="743" y="268" width="251" height="1" fill="#e8e8e8" />
<rect x="755" y="110" width="1" height="48" fill="#6d6d6d" />
<rect x="755" y="157" width="51" height="1" fill="#6d6d6d" />
<g stroke="#6d6d6d" stroke-width="1"><rect x="756.5" y="113.5" width="25" height="8" fill="#fff"/><rect x="756.5" y="122.5" width="38" height="9" fill="#d3d3d3"/><rect x="756.5" y="135.5" width="34" height="8" fill="#fff"/><rect x="756.5" y="144.5" width="25" height="9" fill="#d3d3d3"/></g>
<rect x="829" y="110" width="1" height="48" fill="#6d6d6d" />
<rect x="829" y="157" width="51" height="1" fill="#6d6d6d" />
<g stroke="#6d6d6d" stroke-width="1"><rect x="830.5" y="116.5" width="13" height="12" fill="#fff"/><rect x="843.5" y="116.5" width="22" height="12" fill="#d3d3d3"/><rect x="830.5" y="138.5" width="21" height="12" fill="#fff"/><rect x="851.5" y="138.5" width="22" height="12" fill="#d3d3d3"/></g>
<rect x="830" y="115" width="36" height="2" fill="#6d6d6d" />
<rect x="830" y="137" width="44" height="2" fill="#6d6d6d" />
<rect x="903" y="110" width="1" height="48" fill="#6d6d6d" />
<rect x="903" y="157" width="51" height="1" fill="#6d6d6d" />
<g stroke="#6d6d6d" stroke-width="1"><rect x="904.5" y="116.5" width="13" height="12" fill="#fff"/><rect x="917.5" y="116.5" width="30" height="12" fill="#d3d3d3"/><rect x="904.5" y="138.5" width="21" height="12" fill="#fff"/><rect x="925.5" y="138.5" width="22" height="12" fill="#d3d3d3"/></g>
<rect x="904" y="115" width="44" height="2" fill="#6d6d6d" />
<rect x="904" y="137" width="44" height="2" fill="#6d6d6d" />
<rect x="760" y="205" width="1" height="48" fill="#6d6d6d" />
<rect x="760" y="252" width="46" height="2" fill="#6d6d6d" />
<path d="M760.5 253 L755.5 258.5" stroke="#6d6d6d" stroke-width="1"/>
<g stroke="#6d6d6d" stroke-width="1" stroke-linejoin="round"><path d="M756.5 220 L760.0 216.5 L795.0 216.5 L791.5 220 Z" fill="#d3d3d3"/><path d="M791.5 220 L795.0 216.5 L795.0 225.0 L791.5 228.5 Z" fill="#d3d3d3"/><rect x="756.5" y="220" width="35.0" height="8.5" fill="#d3d3d3"/></g>
<g stroke="#6d6d6d" stroke-width="1" stroke-linejoin="round"><path d="M756.5 212 L760.0 208.5 L782.0 208.5 L778.5 212 Z" fill="#fff"/><path d="M778.5 212 L782.0 208.5 L782.0 216.5 L778.5 220 Z" fill="#fff"/><rect x="756.5" y="212" width="22.0" height="8" fill="#fff"/></g>
<g stroke="#6d6d6d" stroke-width="1" stroke-linejoin="round"><path d="M756.5 242 L760.0 238.5 L785.0 238.5 L781.5 242 Z" fill="#d3d3d3"/><path d="M781.5 242 L785.0 238.5 L785.0 247.0 L781.5 250.5 Z" fill="#d3d3d3"/><rect x="756.5" y="242" width="25.0" height="8.5" fill="#d3d3d3"/></g>
<g stroke="#6d6d6d" stroke-width="1" stroke-linejoin="round"><path d="M756.5 234.5 L760.0 231.0 L791.0 231.0 L787.5 234.5 Z" fill="#fff"/><path d="M787.5 234.5 L791.0 231.0 L791.0 238.5 L787.5 242 Z" fill="#fff"/><rect x="756.5" y="234.5" width="31.0" height="7.5" fill="#fff"/></g>
<rect x="760" y="208" width="22" height="1.5" fill="#6d6d6d" />
<rect x="760" y="230.5" width="27" height="1.5" fill="#6d6d6d" />
<rect x="757" y="211.5" width="22" height="1.5" fill="#6d6d6d" />
<rect x="757" y="233.8" width="31" height="1.5" fill="#6d6d6d" />
<rect x="837" y="205" width="1" height="48" fill="#6d6d6d" />
<rect x="837" y="252" width="34" height="2" fill="#6d6d6d" />
<path d="M837.5 253 L833 258" stroke="#6d6d6d" stroke-width="1"/>
<g stroke="#6d6d6d" stroke-width="1" stroke-linejoin="round"><path d="M840.5 216.5 L845.0 212.0 L865.0 212.0 L860.5 216.5 Z" fill="#d3d3d3"/><path d="M860.5 216.5 L865.0 212.0 L865.0 222.5 L860.5 227 Z" fill="#d3d3d3"/><rect x="840.5" y="216.5" width="20.0" height="10.5" fill="#d3d3d3"/></g>
<g stroke="#6d6d6d" stroke-width="1" stroke-linejoin="round"><path d="M830.5 216.5 L835.0 212.0 L845.0 212.0 L840.5 216.5 Z" fill="#fff"/><path d="M840.5 216.5 L845.0 212.0 L845.0 222.5 L840.5 227 Z" fill="#fff"/><rect x="830.5" y="216.5" width="10.0" height="10.5" fill="#fff"/></g>
<rect x="830.5" y="226" width="30" height="1.5" fill="#6d6d6d" />
<g stroke="#6d6d6d" stroke-width="1" stroke-linejoin="round"><path d="M851.5 237.5 L856.0 233.0 L879.5 233.0 L875 237.5 Z" fill="#d3d3d3"/><path d="M875 237.5 L879.5 233.0 L879.5 242.5 L875 247 Z" fill="#d3d3d3"/><rect x="851.5" y="237.5" width="23.5" height="9.5" fill="#d3d3d3"/></g>
<g stroke="#6d6d6d" stroke-width="1" stroke-linejoin="round"><path d="M830.5 237.5 L835.0 233.0 L856.0 233.0 L851.5 237.5 Z" fill="#fff"/><path d="M851.5 237.5 L856.0 233.0 L856.0 242.5 L851.5 247 Z" fill="#fff"/><rect x="830.5" y="237.5" width="21.0" height="9.5" fill="#fff"/></g>
<g fill="none" stroke="#6d6d6d" stroke-width="1"><path d="M747.5 275 L747.5 292.5 L764 292.5"/><rect x="747.5" y="278.5" width="15" height="2" fill="#ccc"/><rect x="747.5" y="280.5" width="9" height="2" fill="#fff"/><rect x="747.5" y="285.5" width="7" height="2" fill="#ccc"/><rect x="747.5" y="287.5" width="12" height="2" fill="#fff"/></g>
<text x="780" y="289.8" font-size="13.5" fill="#545454" textLength="188.83" lengthAdjust="spacingAndGlyphs" text-anchor="start" >Другие линейчатые диаграммы...</text>
<rect x="800.5" y="291" width="5.0" height="1" fill="#545454" />
<rect x="868.5" y="165" width="248" height="287" fill="#000" opacity="0.12" filter="url(#sh)"/>
<rect x="870.5" y="165.5" width="243" height="283" fill="#fff" stroke="#bebebe" stroke-width="1"/>
<text x="882.5" y="188.3" font-size="15" fill="#484848" font-weight="bold" textLength="199.50" lengthAdjust="spacingAndGlyphs" text-anchor="start" >Линейчатая с накоплением</text>
<text x="882.5" y="214.3" font-size="15" fill="#5c5c5c" textLength="168.00" lengthAdjust="spacingAndGlyphs" text-anchor="start" >Данный тип диаграммы</text>
<text x="882.5" y="234.2" font-size="15" fill="#5c5c5c" textLength="96.00" lengthAdjust="spacingAndGlyphs" text-anchor="start" >используется:</text>
<text x="882.5" y="254" font-size="15" fill="#5c5c5c" textLength="165.00" lengthAdjust="spacingAndGlyphs" text-anchor="start" >• Для сравнения вклада</text>
<text x="882.5" y="274" font-size="15" fill="#5c5c5c" textLength="149.50" lengthAdjust="spacingAndGlyphs" text-anchor="start" >каждого значения по</text>
<text x="882.5" y="294" font-size="15" fill="#5c5c5c" textLength="83.00" lengthAdjust="spacingAndGlyphs" text-anchor="start" >категориям.</text>
<text x="882.5" y="314" font-size="15" fill="#5c5c5c" textLength="216.00" lengthAdjust="spacingAndGlyphs" text-anchor="start" >• Для отображения изменения</text>
<text x="882.5" y="334" font-size="15" fill="#5c5c5c" textLength="198.00" lengthAdjust="spacingAndGlyphs" text-anchor="start" >вклада каждого значения со</text>
<text x="882.5" y="354" font-size="15" fill="#5c5c5c" textLength="74.80" lengthAdjust="spacingAndGlyphs" text-anchor="start" >временем.</text>
<text x="882.5" y="394" font-size="15" fill="#5c5c5c" textLength="165.70" lengthAdjust="spacingAndGlyphs" text-anchor="start" >Применяется в случаях:</text>
<text x="882.5" y="414" font-size="15" fill="#5c5c5c" textLength="208.50" lengthAdjust="spacingAndGlyphs" text-anchor="start" >• Когда текст категорий имеет</text>
<text x="882.5" y="434" font-size="15" fill="#5c5c5c" textLength="112.60" lengthAdjust="spacingAndGlyphs" text-anchor="start" >большую длину.</text>
<rect x="0" y="0" width="1" height="826" fill="#217346" />
</svg></body></html>
